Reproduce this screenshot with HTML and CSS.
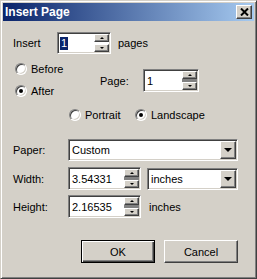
FILE: index.html
```html
<!doctype html>
<html lang="en">
<head>
<meta charset="utf-8">
<title>Insert Page</title>
<link rel="stylesheet" href="styles.css">
</head>
<body>
<div class="window">
    <div class="titlebar">
        <span class="title">Insert Page</span>
        <span class="close">
            <svg width="9" height="8" viewBox="0 0 9 8"><path d="M1 0.5 L8 7.5 M8 0.5 L1 7.5" stroke="#000" stroke-width="2"/></svg>
        </span>
    </div>
    <div class="content">
        <div class="row row-insert">
            <span class="lbl-insert">Insert</span>
            <div class="spin spin-insert">
                <span class="value"><span class="sel">1</span></span>
                <div class="spin-btns"><span class="sb up"></span><span class="sb down"></span></div>
            </div>
            <span class="unit">pages</span>
        </div>

        <div class="position">
            <div class="radios">
                <div class="opt"><span class="radio"></span>Before</div>
                <div class="opt"><span class="radio checked"></span>After</div>
            </div>
            <div class="page-field">
                <span class="lbl-page">Page:</span>
                <div class="spin spin-page gray-mid">
                    <span class="value">1</span>
                    <div class="spin-btns"><span class="sb up"></span><span class="sb down"></span></div>
                </div>
            </div>
        </div>

        <div class="row orient">
            <div class="opt opt-portrait"><span class="radio"></span>Portrait</div>
            <div class="opt"><span class="radio checked"></span>Landscape</div>
        </div>

        <div class="row row-paper">
            <span class="lbl">Paper:</span>
            <div class="combo combo-paper"><span class="value">Custom</span><span class="drop"></span></div>
        </div>

        <div class="row row-dim">
            <span class="lbl">Width:</span>
            <div class="spin spin-dim gray-mid">
                <span class="value">3.54331</span>
                <div class="spin-btns"><span class="sb up"></span><span class="sb down"></span></div>
            </div>
            <div class="combo combo-unit"><span class="value">inches</span><span class="drop"></span></div>
        </div>

        <div class="row row-dim row-height">
            <span class="lbl">Height:</span>
            <div class="spin spin-dim gray-mid">
                <span class="value">2.16535</span>
                <div class="spin-btns"><span class="sb up"></span><span class="sb down"></span></div>
            </div>
            <span class="unit-text">inches</span>
        </div>

        <div class="row actions">
            <span class="btn btn-default">OK</span>
            <span class="btn">Cancel</span>
        </div>
    </div>
</div>
</body>
</html>
```

FILE: styles.css
```css
body {
    margin: 0;
    font: 11px "Liberation Sans", Arial, sans-serif;
    color: #000;
}

.window {
    width: 257px;
    height: 279px;
    box-sizing: border-box;
    background: #d4d0c8;
    border: 1px solid;
    border-color: #d4d0c8 #404040 #404040 #d4d0c8;
    box-shadow: inset 1px 1px #fff, inset -1px -1px #808080;
    padding: 2px;
}

.titlebar {
    height: 18px;
    display: flex;
    align-items: center;
    justify-content: space-between;
    padding: 0 2px;
    background: linear-gradient(to right, #0a246a, #a6caf0);
}

.title {
    color: #fff;
    font-weight: bold;
    font-size: 12px;
}

.close {
    width: 16px;
    height: 14px;
    box-sizing: border-box;
    display: flex;
    align-items: center;
    justify-content: center;
    background: #d4d0c8;
    border: 1px solid;
    border-color: #fff #404040 #404040 #fff;
    box-shadow: inset -1px -1px #808080;
}

.content {
    padding-left: 10px;
}

.row {
    display: flex;
    align-items: center;
}

/* insert row */
.row-insert {
    margin-top: 11px;
    height: 22px;
}

.lbl-insert {
    width: 44px;
}

.unit {
    margin-left: 7px;
}

/* sunken fields */
.spin,
.combo {
    box-sizing: border-box;
    display: flex;
    align-items: stretch;
    background: #fff;
    border: 1px solid;
    border-color: #808080 #fff #fff #808080;
    box-shadow: inset 1px 1px #404040, inset -1px -1px #d4d0c8;
    padding: 1px;
}

.spin .value,
.combo .value {
    flex: 1;
    display: flex;
    align-items: center;
    padding-left: 2px;
}

.spin-insert {
    width: 54px;
    height: 22px;
}

.sel {
    background: #0a246a;
    color: #fff;
    line-height: 13px;
    padding: 0 1px;
    margin-left: -1px;
}

.spin-btns {
    width: 15px;
    display: flex;
    flex-direction: column;
    justify-content: space-between;
}

.gray-mid .spin-btns {
    background: #808080;
}

.sb {
    height: 8px;
    box-sizing: border-box;
    display: flex;
    align-items: center;
    justify-content: center;
    background: #d4d0c8;
    border: 1px solid;
    border-color: #fff #404040 #404040 #fff;
    box-shadow: inset -1px -1px #808080;
}

.sb.up::after,
.sb.down::after {
    content: "";
    border-left: 2px solid transparent;
    border-right: 2px solid transparent;
}

.sb.up::after {
    border-bottom: 2px solid #000;
}

.sb.down::after {
    border-top: 2px solid #000;
}

/* before / after + page */
.position {
    display: flex;
    margin-top: 6px;
}

.radios {
    width: 85px;
    margin-left: 2px;
    display: flex;
    flex-direction: column;
    gap: 4px;
}

.opt {
    height: 18px;
    display: flex;
    align-items: center;
    gap: 4px;
}

.radio {
    width: 12px;
    height: 12px;
    box-sizing: border-box;
    border-radius: 50%;
    background: #fff;
    border: 1px solid;
    border-color: #808080 #fff #fff #808080;
    box-shadow: inset 1px 1px #404040, inset -1px -1px #d4d0c8;
    display: flex;
    align-items: center;
    justify-content: center;
}

.radio.checked::after {
    content: "";
    width: 4px;
    height: 4px;
    border-radius: 50%;
    background: #000;
}

.page-field {
    display: flex;
    align-items: center;
    margin-top: 9px;
    height: 23px;
}

.lbl-page {
    width: 43px;
}

.spin-page {
    width: 56px;
    height: 23px;
}

/* orientation */
.orient {
    margin-top: 7px;
    height: 16px;
    padding-left: 56px;
}

.opt-portrait {
    width: 66px;
}

/* paper + size */
.row-paper {
    margin-top: 16px;
    height: 22px;
}

.lbl {
    width: 55px;
}

.combo-paper {
    width: 170px;
    height: 22px;
}

.drop {
    width: 16px;
    box-sizing: border-box;
    display: flex;
    align-items: center;
    justify-content: center;
    background: #d4d0c8;
    border: 1px solid;
    border-color: #fff #404040 #404040 #fff;
    box-shadow: inset -1px -1px #808080;
}

.drop::after {
    content: "";
    border-left: 4px solid transparent;
    border-right: 4px solid transparent;
    border-top: 4px solid #000;
}

.row-dim {
    margin-top: 6px;
    height: 23px;
}

.row-height {
    margin-top: 5px;
}

.spin-dim {
    width: 73px;
    height: 23px;
}

.combo-unit {
    width: 91px;
    height: 22px;
    margin-left: 6px;
}

.unit-text {
    margin-left: 8px;
}

/* buttons */
.actions {
    margin-top: 22px;
    padding-left: 68px;
    gap: 9px;
}

.btn {
    width: 74px;
    height: 23px;
    box-sizing: border-box;
    display: flex;
    align-items: center;
    justify-content: center;
    border: 1px solid;
    border-color: #fff #404040 #404040 #fff;
    box-shadow: inset -1px -1px #808080;
}

.btn-default {
    border-color: #000;
    box-shadow: inset 1px 1px #fff, inset -1px -1px #404040, inset -2px -2px #808080;
}
```
